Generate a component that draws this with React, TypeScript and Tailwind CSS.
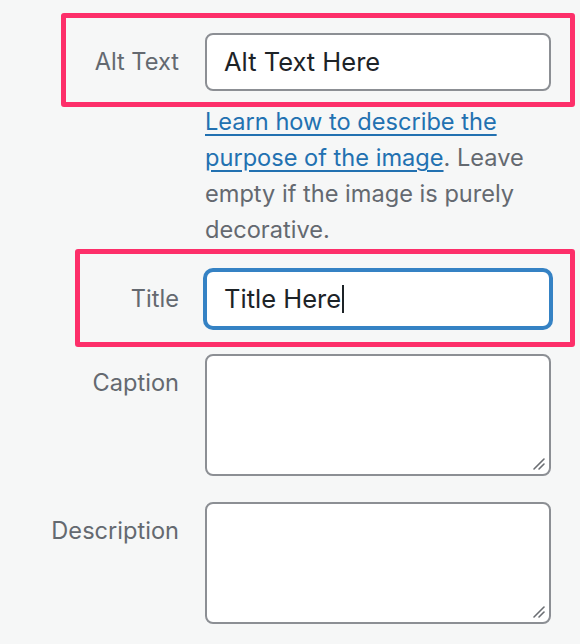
import React from "react";

const font = { fontFamily: "Inter, 'Liberation Sans', sans-serif" };

function Grip() {
  return (
    <svg
      className="absolute right-[3px] bottom-[3px]"
      width="14"
      height="14"
      viewBox="0 0 14 14"
    >
      <line x1="2" y1="12" x2="12" y2="2" stroke="#6b6e73" strokeWidth="1.6" strokeLinecap="round" />
      <line x1="7" y1="12" x2="12" y2="7" stroke="#6b6e73" strokeWidth="1.6" strokeLinecap="round" />
    </svg>
  );
}

function Label({ children }: { children: React.ReactNode }) {
  return (
    <div className="h-[58px] flex items-center justify-end text-[23.6px] text-[#646970]">
      {children}
    </div>
  );
}

export default function App() {
  return (
    <div className="relative w-[580px] h-[644px] bg-[#f6f7f7] overflow-hidden" style={font}>
      <div className="grid grid-cols-[179px_346px] gap-x-[26px] pt-[33px]">
        <Label>Alt Text</Label>
        <div className="h-[58px] rounded-[8px] border-2 border-[#8c8f94] bg-white flex items-center pl-[17px] text-[25.5px] text-[#1d2327]">
          Alt Text Here
        </div>

        <div />
        <p className="mt-[13px] text-[23.6px] leading-[36px] text-[#646970]">
          <a className="text-[#2271b1] underline underline-offset-[4px] decoration-[2px]" href="#">
            Learn how to describe the purpose of the image
          </a>
          . Leave empty if the image is purely decorative.
        </p>

        <div className="mt-[22px]">
          <Label>Title</Label>
        </div>
        <div className="mt-[22px] h-[58px] rounded-[8px] border-2 border-[#3582c4] shadow-[0_0_0_2px_#3582c4] bg-white flex items-center pl-[17px] text-[25.5px] text-[#1d2327]">
          Title Here
          <span className="inline-block w-[2px] h-[28px] bg-[#1d2327] ml-[1px]" />
        </div>

        <div className="mt-[26px]">
          <Label>Caption</Label>
        </div>
        <div className="mt-[26px] relative h-[122px] rounded-[8px] border-2 border-[#8c8f94] bg-white">
          <Grip />
        </div>

        <div className="mt-[26px]">
          <Label>Description</Label>
        </div>
        <div className="mt-[26px] relative h-[122px] rounded-[8px] border-2 border-[#8c8f94] bg-white">
          <Grip />
        </div>
      </div>

      <div className="absolute left-[61px] top-[13px] w-[514px] h-[94px] border-[5px] border-[#fd2f6a] rounded-[3px]" />
      <div className="absolute left-[75px] top-[249px] w-[500px] h-[98px] border-[5px] border-[#fd2f6a] rounded-[3px]" />
    </div>
  );
}
